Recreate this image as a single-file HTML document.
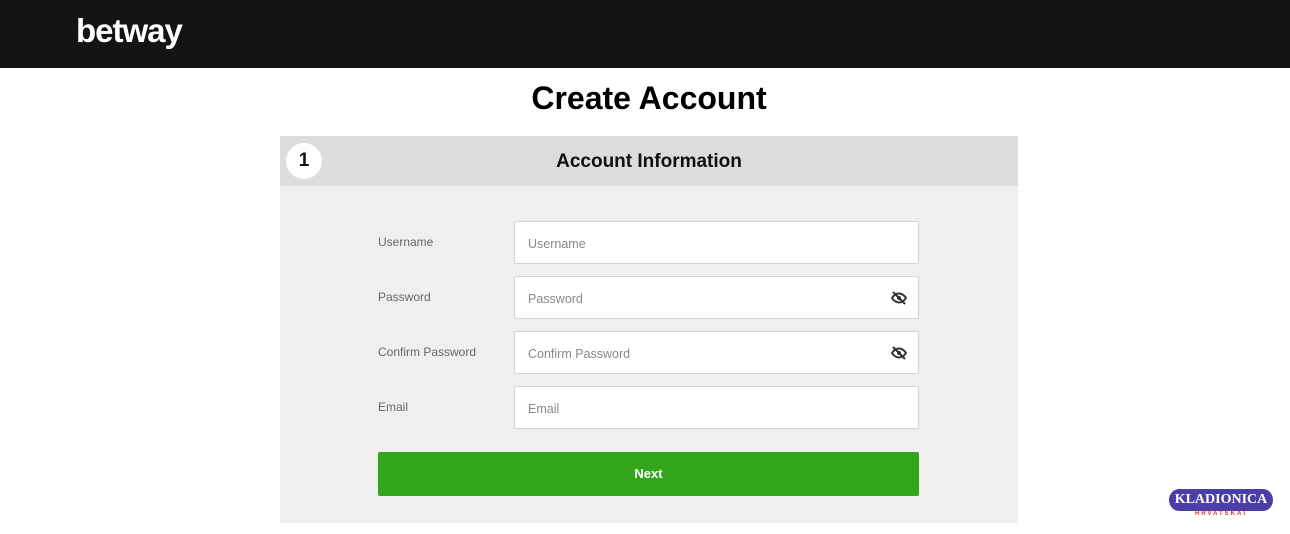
<!DOCTYPE html>
<html><head><style>
*{box-sizing:border-box;margin:0;padding:0}
body{width:1290px;height:534px;background:#fff;font-family:"Liberation Sans",Arial,sans-serif;position:relative;overflow:hidden}
.top{position:absolute;left:0;top:0;width:1290px;height:68px;background:#141414}
.logo{position:absolute;left:76px;top:12px;color:#fff;font-weight:bold;font-size:33px;letter-spacing:-1px}
h1{position:absolute;top:80px;left:0;width:1298px;text-align:center;font-size:32px;font-weight:bold;color:#000}
.card{position:absolute;left:280px;top:136px;width:738px;height:387px;background:#f0efef}
.hd{height:50px;background:#dcdcdc;position:relative;text-align:center;line-height:52px;font-size:19px;font-weight:bold;color:#111}
.num{position:absolute;left:6px;top:7px;width:36px;height:36px;border-radius:50%;background:#fff;line-height:36px;font-size:19px}
.lbl{position:absolute;left:98px;font-size:12px;color:#666}
.inp{position:absolute;left:234px;width:405px;height:43px;background:#fff;border:1px solid #d4d4d4;border-radius:2px;font-size:12.5px;color:#888;padding:15px 0 0 13px}
.eye{position:absolute;right:10px;top:13px}
.btn{position:absolute;left:98px;top:316px;width:541px;height:44px;background:#32a61a;color:#fff;font-weight:bold;font-size:13px;text-align:center;line-height:44px;border-radius:2px}
.wm{position:absolute;left:1169px;top:489px;width:104px;height:22px;background:#4c3ea8;border-radius:10px/50%;color:#fff;font-weight:bold;font-size:14px;text-align:center;line-height:22px;font-family:"Liberation Serif",serif}
.wm2{position:absolute;left:1168px;width:106px;text-align:center;top:511px;color:#d33;font-size:6px;letter-spacing:2px;font-weight:bold}
</style></head><body>
<div class="top"><div class="logo">betway</div></div>
<h1>Create Account</h1>
<div class="card">
<div class="hd"><div class="num">1</div>Account Information</div>
<div class="lbl" style="top:99px">Username</div>
<div class="inp" style="top:85px">Username</div>
<div class="lbl" style="top:154px">Password</div>
<div class="inp" style="top:140px">Password<svg class="eye" width="18" height="16" viewBox="0 0 18 16"><path d="M2 8c2-3 4.5-4.5 7-4.5S14 5 16 8c-2 3-4.5 4.5-7 4.5S4 11 2 8z" fill="none" stroke="#333" stroke-width="2"/><circle cx="9" cy="8" r="2" fill="#333"/><path d="M3 2l12 12" stroke="#333" stroke-width="2"/></svg></div>
<div class="lbl" style="top:209px">Confirm Password</div>
<div class="inp" style="top:195px">Confirm Password<svg class="eye" width="18" height="16" viewBox="0 0 18 16"><path d="M2 8c2-3 4.5-4.5 7-4.5S14 5 16 8c-2 3-4.5 4.5-7 4.5S4 11 2 8z" fill="none" stroke="#333" stroke-width="2"/><circle cx="9" cy="8" r="2" fill="#333"/><path d="M3 2l12 12" stroke="#333" stroke-width="2"/></svg></div>
<div class="lbl" style="top:264px">Email</div>
<div class="inp" style="top:250px">Email</div>
<div class="btn">Next</div>
</div>
<div class="wm">KLADIONICA</div>
<div class="wm2">HRVATSKAI</div>
</body></html>
